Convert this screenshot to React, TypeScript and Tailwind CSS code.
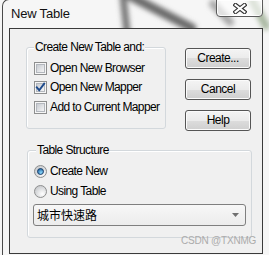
import React from "react";

function CheckBox({ checked }: { checked?: boolean }) {
  return (
    <svg width="13" height="13" viewBox="0 0 13 13" className="shrink-0">
      <defs>
        <linearGradient id="cbin" x1="0" y1="0" x2="1" y2="1">
          <stop offset="0" stopColor="#c4c8ce" />
          <stop offset="1" stopColor="#f8f8f8" />
        </linearGradient>
      </defs>
      <rect x="0.5" y="0.5" width="12" height="12" fill="#f6f6f6" stroke="#8e8f8f" />
      <rect x="2.5" y="2.5" width="8" height="8" fill="url(#cbin)" stroke="#b3b7bd" />
      {checked && (
        <path d="M2.8 6.4 L5.2 9.2 L10.2 2.6" fill="none" stroke="#1d4a8c" strokeWidth="1.9" strokeLinecap="square" />
      )}
    </svg>
  );
}

function Radio({ checked }: { checked?: boolean }) {
  return (
    <svg width="13" height="13" viewBox="0 0 13 13" className="shrink-0">
      <defs>
        <radialGradient id="rbg" cx="0.65" cy="0.7" r="0.7">
          <stop offset="0" stopColor="#ffffff" />
          <stop offset="1" stopColor="#c9cbce" />
        </radialGradient>
        <radialGradient id="rdot" cx="0.6" cy="0.7" r="0.7">
          <stop offset="0" stopColor="#8fdcff" />
          <stop offset="1" stopColor="#1a5f9e" />
        </radialGradient>
      </defs>
      <circle cx="6.5" cy="6.5" r="6" fill="url(#rbg)" stroke="#8e8f8f" />
      {checked && <circle cx="6.5" cy="6.5" r="3" fill="url(#rdot)" stroke="#1b3a62" strokeWidth="0.9" />}
    </svg>
  );
}

function Btn({ label }: { label: string }) {
  return (
    <div className="w-[66px] h-[21px] rounded-[3px] border border-[#555555] bg-[linear-gradient(to_bottom,#f4f4f4_0%,#ebebeb_50%,#dddddd_50%,#cfcfcf_100%)] shadow-[inset_0_0_0_1px_#fbfbfb] flex items-center justify-center text-[12px] leading-[13px] tracking-[-0.5px] text-black">
      {label}
    </div>
  );
}

export default function App() {
  return (
    <div className="relative w-[269px] h-[255px] overflow-hidden bg-[#f6f6f6] font-['Liberation_Sans',Arial,sans-serif] text-black">
      {/* glass streaks behind the frame */}
      <svg className="absolute left-0 top-0" width="269" height="40" viewBox="0 0 269 40">
        <defs>
          <filter id="bl" x="-50%" y="-50%" width="200%" height="200%">
            <feGaussianBlur stdDeviation="2.5" />
          </filter>
        </defs>
        <g filter="url(#bl)" fill="none" strokeLinecap="round">
          <path d="M123 -4 L127 32" stroke="#777777" strokeWidth="7" />
          <path d="M130 -4 L192 28" stroke="#6a6a6a" strokeWidth="9" />
          <path d="M213 4 L230 22" stroke="#a8a8a8" strokeWidth="8" />
          <path d="M252 0 L266 26" stroke="#a9b8a0" strokeWidth="8" />
        </g>
      </svg>
      {/* outer window edge */}
      <div className="absolute left-[2px] top-[-1px] w-[300px] h-[300px] border-l border-t border-[#4a4a4a] rounded-tl-[7px]" />

      <div className="relative flex flex-col">
        <div className="flex h-[28px] items-start">
          <div className="ml-[11px] mt-[7px] text-[13px] leading-[13px] tracking-[-0.2px] text-[#111]">New Table</div>
          <div className="ml-auto mr-[6px] w-[47px] h-[18px] -mt-[1px] rounded-b-[4px] border border-[#5b5b5b] bg-[#ffffff]/60 shadow-[inset_0_0_0_1px_rgba(255,255,255,0.8)] flex items-center justify-center">
            <svg width="14" height="11" viewBox="0 0 14 11" className="mt-[1px]">
              <path d="M2.5 2 L11.5 9 M11.5 2 L2.5 9" stroke="#333" strokeWidth="4.2" strokeLinecap="square" />
              <path d="M2.5 2 L11.5 9 M11.5 2 L2.5 9" stroke="#fff" strokeWidth="2" strokeLinecap="square" />
            </svg>
          </div>
        </div>

        <div className="relative ml-[9px] w-[254px] h-[226px] border border-[#3a3a3a] bg-[#f0f0f0]">
          <div className="flex items-start pt-[18px] pl-[16px]">
            <div className="relative w-[140px] h-[82px] rounded-[3px] border border-[#d3d8dc] shadow-[inset_1px_1px_0_#ffffff]">
              <div className="absolute left-[7px] top-[-7px] px-[1px] bg-[#f0f0f0] text-[12px] leading-[13px] tracking-[-0.6px]">
                Create New Table and:
              </div>
              <div className="flex flex-col pl-[7px] pt-[14px]">
                <div className="flex h-[13px] items-center gap-[3px]">
                  <CheckBox />
                  <span className="text-[12px] leading-[13px] tracking-[-0.6px]">Open New Browser</span>
                </div>
                <div className="mt-[6px] flex h-[13px] items-center gap-[3px]">
                  <CheckBox checked />
                  <span className="text-[12px] leading-[13px] tracking-[-0.6px]">Open New Mapper</span>
                </div>
                <div className="mt-[7px] flex h-[13px] items-center gap-[3px]">
                  <CheckBox />
                  <span className="text-[12px] leading-[13px] tracking-[-0.6px]">Add to Current Mapper</span>
                </div>
              </div>
            </div>
            <div className="ml-[19px] mt-[1px] flex flex-col gap-[10px]">
              <Btn label="Create..." />
              <Btn label="Cancel" />
              <Btn label="Help" />
            </div>
          </div>

          <div className="relative ml-[17px] mt-[19px] w-[225px] h-[88px] rounded-[3px] border border-[#d3d8dc] shadow-[inset_1px_1px_0_#ffffff]">
            <div className="absolute left-[8px] top-[-7px] px-[1px] bg-[#f0f0f0] text-[12px] leading-[13px] tracking-[-0.6px]">
              Table Structure
            </div>
            <div className="flex flex-col pl-[6px] pt-[14px]">
              <div className="flex h-[13px] items-center gap-[3px]">
                <Radio checked />
                <span className="text-[12px] leading-[13px] tracking-[-0.6px]">Create New</span>
              </div>
              <div className="mt-[7px] flex h-[13px] items-center gap-[3px]">
                <Radio />
                <span className="text-[12px] leading-[13px] tracking-[-0.6px]">Using Table</span>
              </div>
            </div>
            <div className="ml-[5px] mt-[6px] w-[213px] h-[22px] rounded-[3px] border border-[#7f7f7f] bg-[linear-gradient(to_bottom,#f7f7f7,#ececec)] flex items-center pl-[3px] pr-[6px]">
              <span className="font-['Noto_Sans_CJK_SC',sans-serif] text-[12px] leading-[14px] text-black">城市快速路</span>
              <svg className="ml-auto" width="7" height="4" viewBox="0 0 7 4">
                <path d="M0 0 L7 0 L3.5 4 Z" fill="#707070" />
              </svg>
            </div>
          </div>

          <div className="absolute left-[171px] top-[207px] text-[10px] leading-[10px] tracking-[-0.2px] text-[#ababab]">
            CSDN @TXNMG
          </div>
        </div>
      </div>
    </div>
  );
}
